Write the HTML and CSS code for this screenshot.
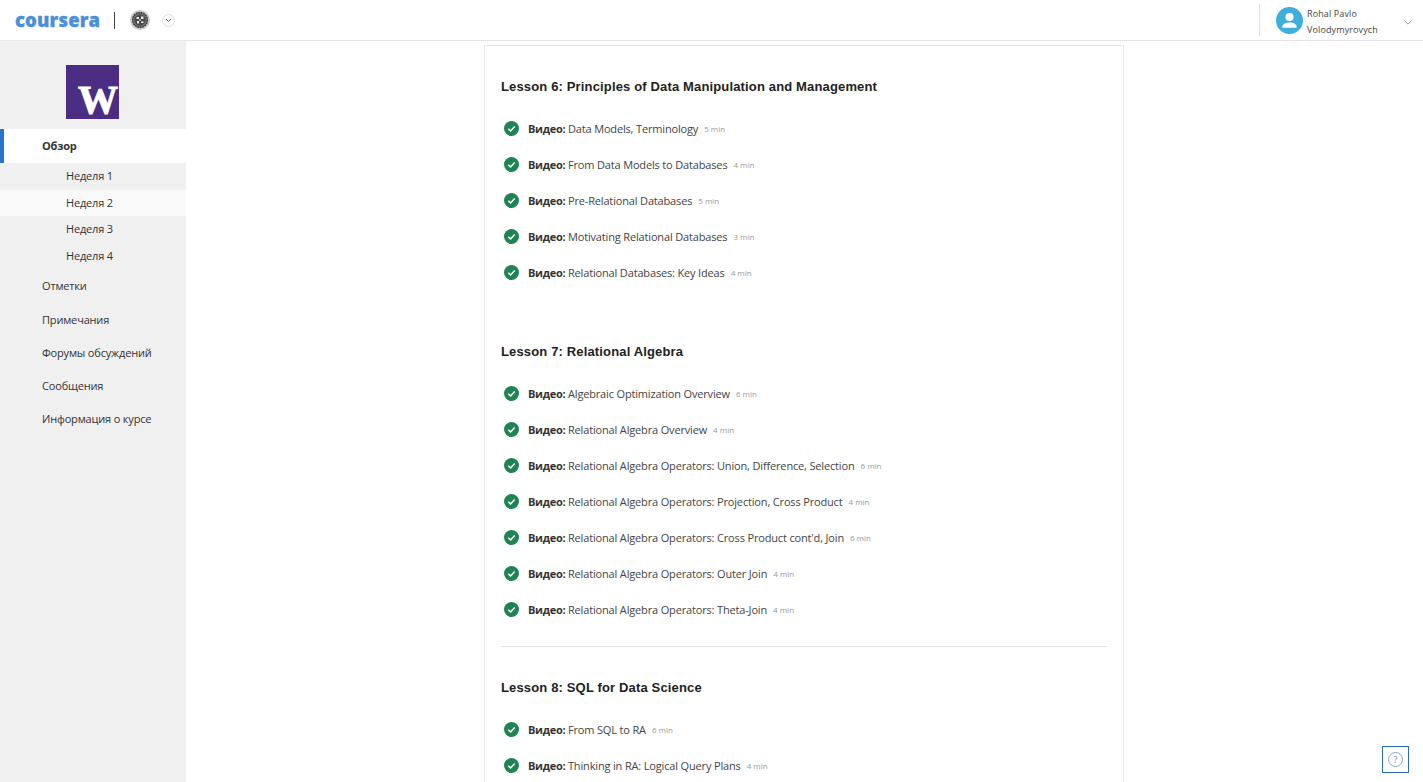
FILE: index.html
```html
<!DOCTYPE html>
<html lang="ru">
<head>
<meta charset="utf-8">
<title>Coursera</title>
<link rel="stylesheet" href="styles.css">
</head>
<body>
<svg class="defs" width="0" height="0" aria-hidden="true">
  <symbol id="check" viewBox="0 0 16 16">
    <circle cx="8" cy="8" r="8" fill="#1f8354"/>
    <path d="M4.600 8.200l2.400 2.400 4.400-4.800" fill="none" stroke="#fff" stroke-width="1.600"/>
  </symbol>
</svg>
<header class="topbar">
  <div class="brand">
    <span class="logo">coursera</span>
    <span class="brand-sep"></span>
    <svg class="seal" viewBox="0 0 20 20" width="20" height="20">
      <circle cx="10" cy="10" r="10" fill="#c8c8c8"/>
      <circle cx="10" cy="10" r="8" fill="#777"/>
      <circle cx="10" cy="10" r="7.300" fill="none" stroke="#333" stroke-width="1.300" stroke-dasharray="1.500 1"/>
      <circle cx="10" cy="10" r="5.600" fill="#4a4a4a"/>
      <path d="M6.500 7h2.500v2h-2.500zM11 6.500h2.500v2.500h-2.500zM7 11h2v2.500h-2zM11 11.500h2.500v1.500h-2.500zM9.300 9.300h1.500v1.500h-1.500z" fill="#e6e6e6"/>
    </svg>
    <span class="switch">
      <svg viewBox="0 0 8 6" width="7" height="5"><path d="M1 1.200l3 3 3-3" fill="none" stroke="#444" stroke-width="1.100"/></svg>
    </span>
  </div>
  <div class="account">
    <svg class="avatar" viewBox="0 0 28 28" width="27" height="27">
      <circle cx="14" cy="14" r="14" fill="#3eaedb"/>
      <circle cx="14" cy="10.400" r="4.200" fill="#fff"/>
      <path d="M6.600 20.500c0-3 3.600-4.500 7.400-4.500s7.400 1.500 7.400 4.500v1H6.600z" fill="#fff"/>
    </svg>
    <div class="account-name">
      <span>Rohal Pavlo</span>
      <span>Volodymyrovych</span>
    </div>
    <svg class="account-caret" viewBox="0 0 10 6" width="8" height="5"><path d="M.7.7L5 5 9.300.7" fill="none" stroke="#888" stroke-width="1"/></svg>
  </div>
</header>
<div class="layout">
  <nav class="sidebar">
    <div class="partner">
      <div class="partner-logo"><span class="partner-w">W</span></div>
    </div>
    <a class="nav-item nav-active">Обзор</a>
    <div class="weeks">
      <a class="week">Неделя 1</a>
      <a class="week week-current">Неделя 2</a>
      <a class="week">Неделя 3</a>
      <a class="week">Неделя 4</a>
    </div>
    <div class="nav-list">
      <a class="nav-item">Отметки</a>
      <a class="nav-item">Примечания</a>
      <a class="nav-item">Форумы обсуждений</a>
      <a class="nav-item">Сообщения</a>
      <a class="nav-item">Информация о курсе</a>
    </div>
  </nav>
  <main class="content">
    <section class="card">
      <div class="lesson">
        <h2 class="lesson-title">Lesson 6: Principles of Data Manipulation and Management</h2>
        <ul class="items">
          <li class="item"><svg class="tick"><use href="#check"/></svg><span class="item-text"><b>Видео:</b> Data Models, Terminology</span><span class="dur">5 min</span></li>
          <li class="item"><svg class="tick"><use href="#check"/></svg><span class="item-text"><b>Видео:</b> From Data Models to Databases</span><span class="dur">4 min</span></li>
          <li class="item"><svg class="tick"><use href="#check"/></svg><span class="item-text"><b>Видео:</b> Pre-Relational Databases</span><span class="dur">5 min</span></li>
          <li class="item"><svg class="tick"><use href="#check"/></svg><span class="item-text"><b>Видео:</b> Motivating Relational Databases</span><span class="dur">3 min</span></li>
          <li class="item"><svg class="tick"><use href="#check"/></svg><span class="item-text"><b>Видео:</b> Relational Databases: Key Ideas</span><span class="dur">4 min</span></li>
        </ul>
      </div>
      <div class="lesson lesson-ruled">
        <h2 class="lesson-title">Lesson 7: Relational Algebra</h2>
        <ul class="items">
          <li class="item"><svg class="tick"><use href="#check"/></svg><span class="item-text"><b>Видео:</b> Algebraic Optimization Overview</span><span class="dur">6 min</span></li>
          <li class="item"><svg class="tick"><use href="#check"/></svg><span class="item-text"><b>Видео:</b> Relational Algebra Overview</span><span class="dur">4 min</span></li>
          <li class="item"><svg class="tick"><use href="#check"/></svg><span class="item-text"><b>Видео:</b> Relational Algebra Operators: Union, Difference, Selection</span><span class="dur">6 min</span></li>
          <li class="item"><svg class="tick"><use href="#check"/></svg><span class="item-text"><b>Видео:</b> Relational Algebra Operators: Projection, Cross Product</span><span class="dur">4 min</span></li>
          <li class="item"><svg class="tick"><use href="#check"/></svg><span class="item-text"><b>Видео:</b> Relational Algebra Operators: Cross Product cont'd, Join</span><span class="dur">6 min</span></li>
          <li class="item"><svg class="tick"><use href="#check"/></svg><span class="item-text"><b>Видео:</b> Relational Algebra Operators: Outer Join</span><span class="dur">4 min</span></li>
          <li class="item"><svg class="tick"><use href="#check"/></svg><span class="item-text"><b>Видео:</b> Relational Algebra Operators: Theta-Join</span><span class="dur">4 min</span></li>
        </ul>
      </div>
      <div class="lesson">
        <h2 class="lesson-title">Lesson 8: SQL for Data Science</h2>
        <ul class="items">
          <li class="item"><svg class="tick"><use href="#check"/></svg><span class="item-text"><b>Видео:</b> From SQL to RA</span><span class="dur">6 min</span></li>
          <li class="item"><svg class="tick"><use href="#check"/></svg><span class="item-text"><b>Видео:</b> Thinking in RA: Logical Query Plans</span><span class="dur">4 min</span></li>
        </ul>
      </div>
    </section>
  </main>
</div>
<button class="help" type="button"><span class="help-mark">?</span></button>
</body>
</html>
```

FILE: styles.css
```css
* { box-sizing: border-box; }
html, body { margin: 0; height: 782px; overflow: hidden; background: #fff; }
body { font-family: "Open Sans", sans-serif; font-size: 11px; color: #333; }
.defs { position: absolute; }

.topbar {
  height: 41px;
  display: flex;
  justify-content: space-between;
  align-items: center;
  border-bottom: 1px solid #e6e6e6;
}
.brand { display: flex; align-items: center; padding-left: 15px; }
.logo {
  font-family: "Open Sans", sans-serif;
  font-weight: 800;
  font-size: 18.500px;
  letter-spacing: 0.15px;
  line-height: 20px;
  color: #4a8fd8;
  -webkit-text-stroke: 0.3px #4a8fd8;
  width: 85px;
  white-space: nowrap;
}
.brand-sep { width: 1px; height: 17px; background: #444; margin-left: 14px; }
.seal { margin-left: 15px; }
.switch {
  width: 13px; height: 13px; margin-left: 12px;
  border: 1px solid #ddd; border-radius: 50%;
  display: flex; align-items: center; justify-content: center;
}
.account {
  height: 32px;
  width: 164px;
  border-left: 1px solid #e0e0e0;
  display: flex;
  align-items: center;
  padding-left: 16px;
}
.avatar { flex: none; }
.account-name {
  display: flex; flex-direction: column;
  margin: 3px 0 0 4px;
  font-size: 9px;
  line-height: 16px;
  letter-spacing: 0.12px;
  color: #444;
}
.account-caret { margin: 5px 0 0 26px; }

.layout { display: flex; height: 741px; }
.sidebar { width: 186px; flex: none; background: #f0f0f0; font-size: 11px; letter-spacing: -0.17px; color: #333; }
.partner { height: 88px; padding: 24px 0 0 66px; }
.partner-logo { width: 53px; height: 54px; background: #4b2e83; overflow: hidden; padding: 19px 0 0 12px; }
.partner-w {
  display: block;
  font-family: "Liberation Serif", serif;
  font-weight: 700;
  font-size: 40px;
  line-height: 32px;
  color: #fff;
  -webkit-text-stroke: 1px #fff;
  letter-spacing: 0;
  white-space: nowrap;
}
.nav-item { display: block; padding-left: 42px; height: 33.250px; line-height: 33.250px; }
.nav-active {
  height: 34px; line-height: 34px;
  background: #fff;
  border-left: 4px solid #2a73cc;
  padding-left: 38px;
  font-weight: 700;
}
.weeks { display: flex; flex-direction: column; }
.week { display: block; height: 26.600px; line-height: 26.600px; padding-left: 66px; }
.week-current { background: #f9f9f9; }
.nav-list { padding-top: 0; }

.content { flex: 1; display: flex; justify-content: center; align-items: flex-start; padding: 4px 1px 0 0; overflow: hidden; }
.card { width: 640px; flex: none; border: 1px solid #e5e5e5; padding: 0 16px; }
.lesson { padding-top: 31px; }
.lesson + .lesson { padding-top: 52px; }
.lesson-ruled { padding-bottom: 19px; }
.lesson-ruled + .lesson { border-top: 1px solid #e5e5e5; padding-top: 31px; }
.lesson-title {
  margin: 0;
  padding-top: 1px;
  font-family: "Liberation Sans", Arial, sans-serif;
  font-size: 13px;
  font-weight: 700;
  line-height: 18px;
  letter-spacing: 0.15px;
  color: #222;
}
.items { list-style: none; margin: 14px 0 0; padding: 0; }
.item { display: flex; align-items: center; height: 36px; padding-left: 3px; }
.tick { width: 15px; height: 15px; flex: none; }
.item-text { margin-left: 9px; color: #444; letter-spacing: -0.16px; }
.item-text b { color: #333; letter-spacing: -0.3px; }
.dur { margin-left: 6px; font-size: 8px; color: #999; padding-top: 1px; }

.help {
  position: fixed;
  left: 1382px; top: 746px;
  width: 27px; height: 27px;
  border: 1px solid #2a6cb8;
  background: #fff;
  padding: 0;
  display: flex; align-items: center; justify-content: center;
}
.help-mark {
  width: 15px; height: 15px;
  border: 1px solid #8aa5cc; border-radius: 50%;
  color: #6f8fbd; font: 9px/13px "Open Sans", sans-serif;
  text-align: center;
}
```
